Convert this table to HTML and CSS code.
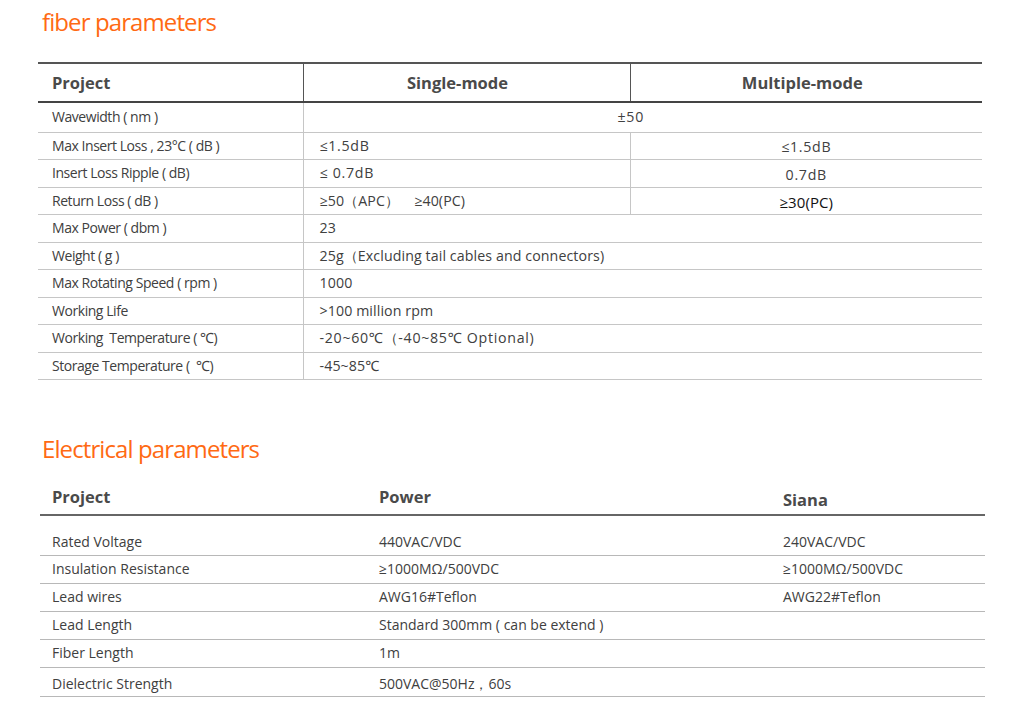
FILE: index.html
```html
<!DOCTYPE html>
<html>
<head>
<meta charset="utf-8">
<link rel="stylesheet" href="styles.css">
</head>
<body>
<section class="block fiber">
  <h2 class="title">fiber parameters</h2>
  <table class="spec">
    <colgroup><col class="c1"><col class="c2"><col class="c3"></colgroup>
    <thead>
      <tr><th class="left">Project</th><th class="mid">Single-mode</th><th class="right">Multiple-mode</th></tr>
    </thead>
    <tbody>
      <tr class="first"><td>Wavewidth ( nm )</td><td colspan="2" class="center wide spaced">±50</td></tr>
      <tr><td>Max Insert Loss , 23°C ( dB )</td><td class="spaced">≤1.5dB</td><td class="center spaced">≤1.5dB</td></tr>
      <tr><td>Insert Loss Ripple ( dB)</td><td class="spaced">≤ 0.7dB</td><td class="center spaced">0.7dB</td></tr>
      <tr><td>Return Loss ( dB )</td><td>≥50（APC）&nbsp;&nbsp;&nbsp;&nbsp;≥40(PC)</td><td class="center dark">≥30(PC)</td></tr>
      <tr><td>Max Power ( dbm )</td><td colspan="2">23</td></tr>
      <tr><td>Weight ( g )</td><td colspan="2">25g（Excluding tail cables and connectors)</td></tr>
      <tr><td>Max Rotating Speed ( rpm )</td><td colspan="2">1000</td></tr>
      <tr><td>Working Life</td><td colspan="2">&gt;100 million rpm</td></tr>
      <tr><td>Working&nbsp; Temperature ( ℃)</td><td colspan="2" class="spaced">-20~60℃（-40~85℃ Optional)</td></tr>
      <tr><td>Storage Temperature (&nbsp; ℃)</td><td colspan="2">-45~85℃</td></tr>
    </tbody>
  </table>
</section>
<section class="block elec">
  <h2 class="title">Electrical parameters</h2>
  <table class="spec2">
    <colgroup><col class="d1"><col class="d2"><col class="d3"></colgroup>
    <thead>
      <tr><th>Project</th><th>Power</th><th class="low">Siana</th></tr>
    </thead>
    <tbody>
      <tr class="first"><td>Rated Voltage</td><td>440VAC/VDC</td><td>240VAC/VDC</td></tr>
      <tr><td>Insulation Resistance</td><td>≥1000MΩ/500VDC</td><td>≥1000MΩ/500VDC</td></tr>
      <tr><td>Lead wires</td><td>AWG16#Teflon</td><td>AWG22#Teflon</td></tr>
      <tr><td>Lead Length</td><td colspan="2">Standard 300mm ( can be extend )</td></tr>
      <tr><td>Fiber Length</td><td colspan="2">1m</td></tr>
      <tr class="last"><td>Dielectric Strength</td><td colspan="2">500VAC@50Hz，60s</td></tr>
    </tbody>
  </table>
</section>
</body>
</html>
```

FILE: styles.css
```css
html, body {
  margin: 0;
  padding: 0;
  background: #ffffff;
}
body {
  font-family: "Open Sans", "Noto Sans", "Liberation Sans", sans-serif;
  color: #404040;
  width: 1010px;
}
.title {
  margin: 0;
  font-weight: 400;
  font-size: 24px;
  line-height: 30px;
  color: #ff6a13;
  letter-spacing: -0.9px;
}
.fiber .title {
  padding: 7px 0 0 42px;
}
.spec {
  margin: 25px 0 0 38px;
  width: 944px;
  border-collapse: collapse;
  table-layout: fixed;
}
.c1 { width: 265px; }
.c2 { width: 327px; }
.c3 { width: 352px; }
.spec th {
  height: 37px;
  padding: 0;
  font-size: 16.5px;
  font-weight: 700;
  color: #4a4a4a;
  text-align: center;
  border-top: 2px solid #555;
  border-bottom: 2px solid #444;
  border-left: 1.5px solid #555;
}
.spec th.left {
  text-align: left;
  padding-left: 14px;
  border-left: none;
}
.spec th.mid {
  padding-right: 18px;
}
.spec th.right {
  padding-right: 8px;
}
.spec td {
  box-sizing: border-box;
  height: 27.5px;
  padding: 0 0 0 14px;
  font-size: 14px;
  line-height: 18px;
  letter-spacing: -0.45px;
  border-bottom: 1.5px solid #c6c6c6;
  border-left: 1.5px solid #c6c6c6;
  white-space: nowrap;
}
.spec td:first-child {
  border-left: none;
}
.spec td + td {
  padding-left: 16px;
  font-size: 14.2px;
  letter-spacing: 0.1px;
}
.spec tr.first td {
  height: 30px;
}
.spec td.center {
  text-align: center;
  padding-left: 0;
  padding-top: 3px;
}
.spec td.wide {
  padding-right: 24px;
  padding-top: 0;
}
.spec td.spaced {
  letter-spacing: 0.7px;
}
.spec td.dark {
  color: #111;
  font-size: 15px;
}
.elec .title {
  padding: 54px 0 0 42px;
}
.spec2 {
  margin: 21px 0 0 40px;
  width: 945px;
  border-collapse: collapse;
  table-layout: fixed;
}
.d1 { width: 327px; }
.d2 { width: 404px; }
.d3 { width: 214px; }
.spec2 th {
  height: 26px;
  padding: 0 0 0 12px;
  text-align: left;
  font-size: 16.5px;
  font-weight: 700;
  color: #4a4a4a;
  vertical-align: top;
  border-bottom: 2.5px solid #666;
}
.spec2 th.low {
  padding-top: 3px;
}
.spec2 td {
  box-sizing: border-box;
  height: 28px;
  padding: 0 0 0 12px;
  font-size: 14px;
  line-height: 18px;
  border-bottom: 1.5px solid #b8b8b8;
  white-space: nowrap;
}
.spec2 tr.first td {
  height: 40px;
  vertical-align: bottom;
  padding-bottom: 4px;
}
.spec2 tr.last td {
  height: 29px;
  padding-top: 4px;
}
```
